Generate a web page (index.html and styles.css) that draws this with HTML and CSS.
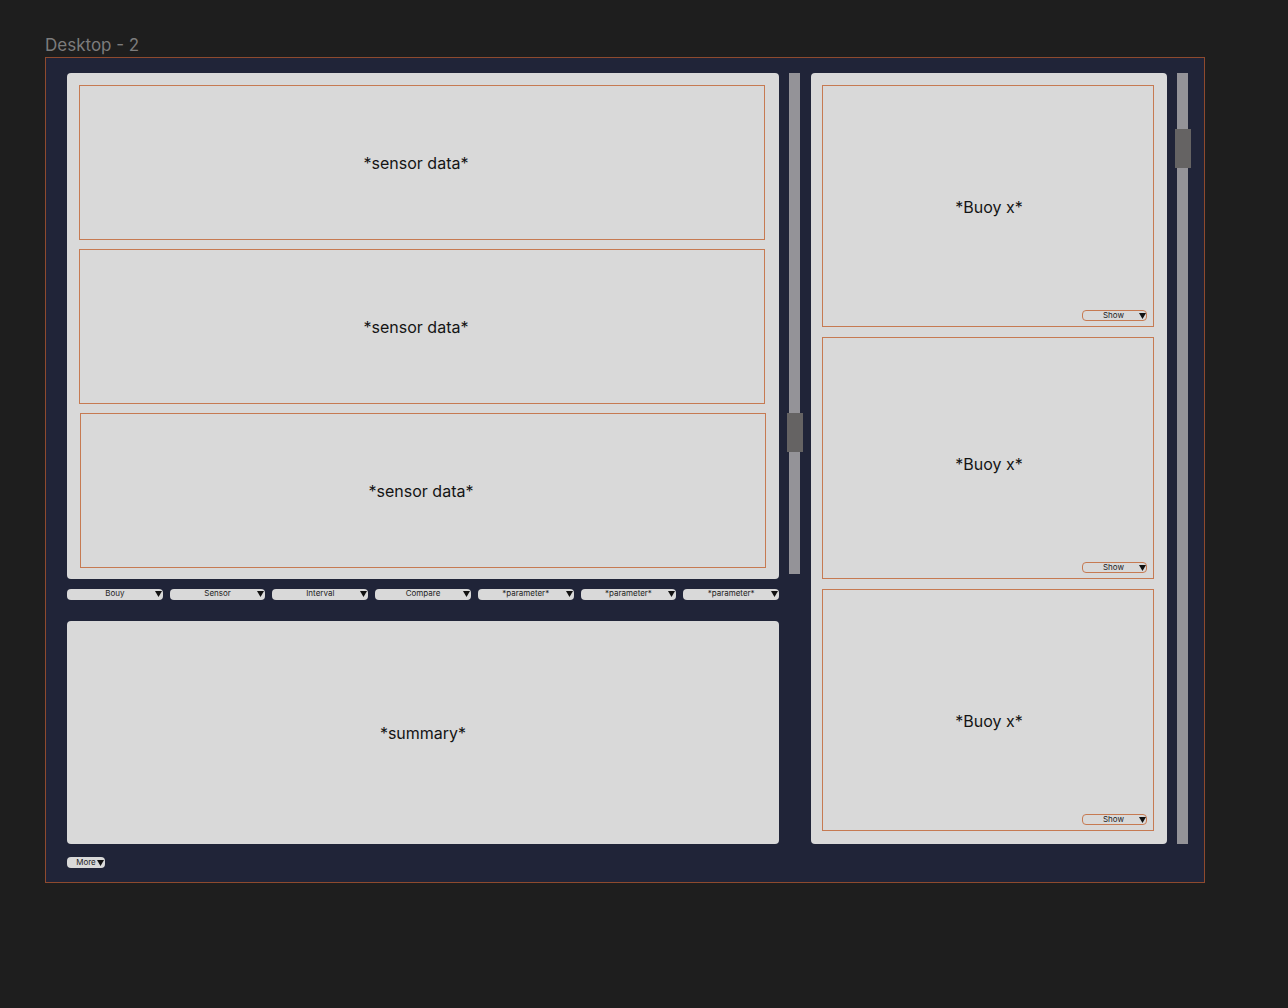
FILE: index.html
```html
<!DOCTYPE html>
<html lang="en">
<head>
<meta charset="utf-8">
<meta name="viewport" content="width=device-width, initial-scale=1">
<title>Desktop - 2</title>
<link rel="stylesheet" href="styles.css">
</head>
<body>
<h1 class="title">Desktop - 2</h1>
<main class="frame">
  <div class="left">
    <section class="panel sensors" aria-label="Sensors">
      <article class="card sensor">*sensor data*</article>
      <article class="card sensor">*sensor data*</article>
      <article class="card sensor sensor-active">*sensor data*</article>
    </section>
    <form class="filters">
      <span class="drop"><select aria-label="Bouy"><option>Bouy</option></select><svg class="caret" viewBox="0 0 7 6"><path d="M0 0h7L3.5 6z"/></svg></span>
      <span class="drop"><select aria-label="Sensor"><option>Sensor</option></select><svg class="caret" viewBox="0 0 7 6"><path d="M0 0h7L3.5 6z"/></svg></span>
      <span class="drop"><select aria-label="Interval"><option>Interval</option></select><svg class="caret" viewBox="0 0 7 6"><path d="M0 0h7L3.5 6z"/></svg></span>
      <span class="drop"><select aria-label="Compare"><option>Compare</option></select><svg class="caret" viewBox="0 0 7 6"><path d="M0 0h7L3.5 6z"/></svg></span>
      <span class="drop"><select aria-label="Parameter 1"><option>*parameter*</option></select><svg class="caret" viewBox="0 0 7 6"><path d="M0 0h7L3.5 6z"/></svg></span>
      <span class="drop"><select aria-label="Parameter 2"><option>*parameter*</option></select><svg class="caret" viewBox="0 0 7 6"><path d="M0 0h7L3.5 6z"/></svg></span>
      <span class="drop"><select aria-label="Parameter 3"><option>*parameter*</option></select><svg class="caret" viewBox="0 0 7 6"><path d="M0 0h7L3.5 6z"/></svg></span>
    </form>
    <section class="panel summary">*summary*</section>
  </div>
  <div class="track track-sensors"><div class="thumb thumb-sensors"></div></div>
  <section class="panel buoys" aria-label="Buoys">
    <article class="card buoy">
      <p class="buoy-name">*Buoy x*</p>
      <span class="drop show"><select aria-label="Show buoy 1"><option>Show</option></select><svg class="caret" viewBox="0 0 7 6"><path d="M0 0h7L3.5 6z"/></svg></span>
    </article>
    <article class="card buoy buoy-mid">
      <p class="buoy-name">*Buoy x*</p>
      <span class="drop show"><select aria-label="Show buoy 2"><option>Show</option></select><svg class="caret" viewBox="0 0 7 6"><path d="M0 0h7L3.5 6z"/></svg></span>
    </article>
    <article class="card buoy buoy-low">
      <p class="buoy-name">*Buoy x*</p>
      <span class="drop show"><select aria-label="Show buoy 3"><option>Show</option></select><svg class="caret" viewBox="0 0 7 6"><path d="M0 0h7L3.5 6z"/></svg></span>
    </article>
  </section>
  <div class="track"><div class="thumb thumb-buoys"></div></div>
  <span class="drop more"><select aria-label="More"><option>More</option></select><svg class="caret" viewBox="0 0 7 6"><path d="M0 0h7L3.5 6z"/></svg></span>
</main>
</body>
</html>
```
FILE: styles.css
```css
* { box-sizing: border-box; }

body {
  margin: 0;
  padding: 35px 83px 40px 45px;
  background: #1e1e1e;
  color: #141414;
  font-family: Inter, "Liberation Sans", sans-serif;
  font-size: 16px;
  line-height: 20px;
}

.title {
  margin: 0 0 2px;
  color: #7c7c7c;
  font-size: 17px;
  font-weight: 400;
  line-height: 20px;
}

.frame {
  display: grid;
  grid-template-columns: 712fr 11px 357fr 11px;
  column-gap: 10px;
  row-gap: 13px;
  padding: 15px 16px 14px 21px;
  border: 1px solid #8e4a2e;
  background: #202438;
}

.left {
  display: flex;
  flex-direction: column;
}

.panel {
  border-radius: 4px;
  background: #d9d9d9;
}

.card { border: 1px solid #c67a52; }

.sensors {
  display: flex;
  flex-direction: column;
  gap: 9px;
  padding: 12px 13px 11px 12px;
}

.sensor {
  display: flex;
  align-items: center;
  justify-content: center;
  height: 155px;
  margin-right: 1px;
  padding-right: 12px;
}

.sensor-active {
  margin: 0 0 0 1px;
  padding-right: 4px;
}

.filters {
  display: grid;
  grid-template-columns: repeat(7, 1fr);
  gap: 7px;
  margin: 10px 0 21px;
}

.summary {
  display: flex;
  flex: 1;
  align-items: center;
  justify-content: center;
  min-height: 223px;
}

.drop {
  position: relative;
  display: block;
  height: 11px;
}

.drop select {
  display: block;
  width: 100%;
  height: 100%;
  margin: 0;
  padding: 0 0 2px;
  border: 0;
  border-radius: 4px;
  appearance: none;
  background: #d9d9d9;
  color: #222;
  font-family: inherit;
  font-size: 8px;
  line-height: 9px;
  text-align-last: center;
}

.caret {
  position: absolute;
  top: 2px;
  right: 1px;
  width: 7px;
  height: 6px;
  fill: #111;
  pointer-events: none;
}

.buoys {
  display: flex;
  flex-direction: column;
  gap: 10px;
  margin-left: 1px;
  padding: 12px 13px 13px 11px;
}

.buoy {
  display: flex;
  flex-direction: column;
  height: 242px;
  padding: 0 6px 5px;
}

.buoy-name {
  display: flex;
  flex: 1;
  align-items: center;
  justify-content: center;
  margin: 0;
  padding: 18px 0 0 2px;
}

.buoy-mid .buoy-name { padding-top: 28px; }
.buoy-low .buoy-name { padding-top: 38px; }

.show {
  width: 65px;
  align-self: flex-end;
}

.show select {
  padding: 0 2px 0 0;
  border: 1px solid #c67a52;
}

.show .caret,
.more .caret { top: 3px; }

.more { width: 38px; }
.more select { padding: 0; }

.track {
  position: relative;
  background: #949398;
}

.track-sensors {
  height: 65%;
  align-self: start;
}

.thumb {
  position: absolute;
  left: -2px;
  width: 16px;
  height: 39px;
  background: #656363;
}

.thumb-sensors { top: 67.8%; }
.thumb-buoys { top: 7.3%; }
```
